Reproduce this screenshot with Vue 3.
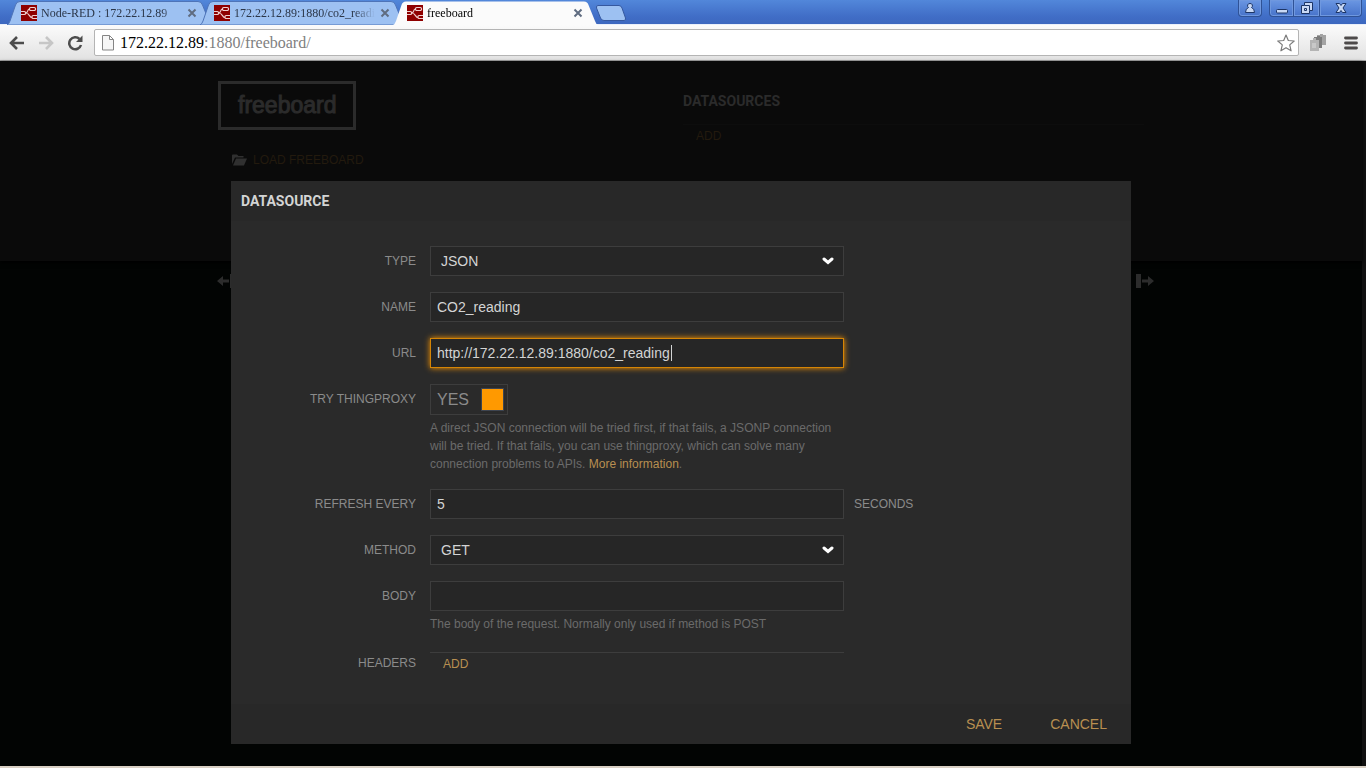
<script setup>
import { ref } from 'vue'

const tabs = [
  { title: 'Node-RED : 172.22.12.89', active: false },
  { title: '172.22.12.89:1880/co2_reading', active: false },
  { title: 'freeboard', active: true },
]
const type = ref('JSON')
const name = ref('CO2_reading')
const url = ref('http://172.22.12.89:1880/co2_reading')
const proxy = ref(true)
const refresh = ref('5')
const method = ref('GET')
const body = ref('')
</script>

<template>
  <div class="window">
    <header class="titlebar">
      <nav class="tabs">
        <div v-for="t in tabs" :key="t.title" class="tab" :class="{ active: t.active }">
          <svg class="tab-shape" viewBox="0 0 209 24" preserveAspectRatio="none" aria-hidden="true">
            <path d="M2 24 Q4 23 5 20 L10.500 4 Q11.500 .5 15 .5 H193 Q196.500 .5 197.500 4 L204 20 Q205 23 207 24 Z" />
          </svg>
          <svg class="favicon" viewBox="0 0 16 16" aria-hidden="true">
            <rect width="16" height="16" fill="#8f0000" />
            <g fill="none" stroke="#f0d0d0" stroke-width="1.200">
              <rect x="8.500" y="2.500" width="6" height="3" rx="1.200" />
              <path d="M0 6.500 H3.500 Q4.500 6.500 4.500 7.500 V8.500 Q4.500 9.500 3.500 9.500 H0" />
              <path d="M4.500 8 C7.500 8 6 4 8.500 4 M4.500 8 C9 8 8 12.500 11 12.500 M16 10.500 H12 Q11 10.500 11 11.500 V12.500 Q11 13.500 12 13.500 H16" />
            </g>
          </svg>
          <a href="#" class="tab-title">{{ t.title }}</a>
          <button class="tab-close" aria-label="Close tab">
            <svg viewBox="0 0 10 10"><path d="M1.500 1.500 L8.500 8.500 M8.500 1.500 L1.500 8.500" /></svg>
          </button>
        </div>
        <button class="new-tab" aria-label="New tab">
          <svg viewBox="0 0 32 16"><path d="M3 .5 H24 Q26 .5 27 3 L30.500 13 Q31 15.500 29 15.500 H9 Q6.500 15.500 5.500 13 L1.500 3 Q1 .5 3 .5 Z" /></svg>
        </button>
      </nav>
      <div class="win-controls">
        <button class="ctl user" aria-label="User">
          <svg viewBox="0 0 12 12"><path d="M6 1.500 a2.200 2.200 0 0 1 1.500 4 Q10.500 6.500 10.500 10.500 H1.500 Q1.500 6.500 4.500 5.500 A2.200 2.200 0 0 1 6 1.500 Z" /></svg>
        </button>
        <div class="ctl-group">
          <button class="ctl min" aria-label="Minimize">
            <svg viewBox="0 0 12 12"><rect x=".5" y="7.500" width="11" height="3.500" rx="1" /></svg>
          </button>
          <button class="ctl max" aria-label="Restore">
            <svg viewBox="0 0 12 12"><path d="M3.500 .5 H11.500 V8.500 H8.500 V11.500 H.5 V3.500 H3.500 Z" /><path d="M3.500 3.500 H8.500 V8.500 M3.500 6.500 H5.500 V8.500 H3.500 Z" /></svg>
          </button>
          <button class="ctl close" aria-label="Close">
            <svg viewBox="0 0 12 12"><path d="M1 1.500 H4.500 L6 3.500 L7.500 1.500 H11 L8 6 L11 10.500 H7.500 L6 8.500 L4.500 10.500 H1 L4 6 Z" /></svg>
          </button>
        </div>
      </div>
    </header>

    <div class="toolbar">
      <button class="tool" aria-label="Back">
        <svg viewBox="0 0 16 16"><path d="M8 2 L2 8 L8 14 M2.500 8 H15" fill="none" stroke="#4c4c4c" stroke-width="2.600" /></svg>
      </button>
      <button class="tool" aria-label="Forward">
        <svg viewBox="0 0 16 16"><path d="M8 2 L14 8 L8 14 M13.500 8 H1" fill="none" stroke="#c6c6c6" stroke-width="2.600" /></svg>
      </button>
      <button class="tool" aria-label="Reload">
        <svg viewBox="0 0 16 16"><path d="M12.500 4 A6 6 0 1 0 14 10" fill="none" stroke="#4c4c4c" stroke-width="2.500" /><path d="M15.500 .5 V7 H9 Z" fill="#4c4c4c" /></svg>
      </button>
      <div class="address">
        <svg class="page-icon" viewBox="0 0 12 16"><path d="M.5 .5 H7.500 L11.500 4.500 V15 H.5 Z M7.500 .5 V4.500 H11.500" fill="#f6f6f6" stroke="#858585" /></svg>
        <span class="address-text"><b>172.22.12.89</b>:1880/freeboard/</span>
        <button class="star" aria-label="Bookmark">
          <svg viewBox="0 0 18 18"><path d="M9 1 L11.300 6.500 L17.200 7 L12.700 10.900 L14.100 16.800 L9 13.700 L3.900 16.800 L5.300 10.900 L.8 7 L6.700 6.500 Z" fill="#fff" stroke="#7b7b7b" stroke-width="1.200" stroke-linejoin="round" /></svg>
        </button>
      </div>
      <button class="tool ext" aria-label="Extension">
        <svg viewBox="0 0 18 18"><path d="M8 1 h3 v-1 h3 v1 h3 v10 h-9 z" fill="#a3a3a3" /><path d="M5 3 h3 v-1 h3 v1 h2 v11 h-8 z" fill="#7b7b7b" /><path d="M1 6 h3 v-2 h3 v2 h3 v11 h-9 z" fill="#b4b4b4" /><path d="M3 9 h4 v5 h-4 z" fill="#c8c8c8" /></svg>
      </button>
      <button class="tool menu" aria-label="Menu">
        <svg viewBox="0 0 14 14"><path d="M1.500 2 H12.500 M1.500 7 H12.500 M1.500 12 H12.500" stroke="#4d4a4a" stroke-width="2.800" stroke-linecap="round" /></svg>
      </button>
    </div>

    <main class="page">
      <div class="board">
        <section class="board-head">
          <div class="board-inner">
            <div>
              <h1 class="logo">freeboard</h1>
              <a href="#" class="load">
                <svg viewBox="0 0 15 12"><path d="M0 10 V1.500 Q0 .5 1 .5 H5 L6.500 2 H11.500 V3.500 H3 Z" /><path d="M1 11.500 L4 4.500 H15 L12 11.500 Z" /></svg>
                <span>LOAD FREEBOARD</span>
              </a>
            </div>
            <div>
              <h2 class="ds-title">DATASOURCES</h2>
              <div class="ds-row"><a href="#">ADD</a></div>
            </div>
          </div>
        </section>
        <div class="columns">
          <svg viewBox="0 0 19 14"><path d="M0 7 L6 2 V5.500 H12 V8.500 H6 V12 Z M13 0 H18 V14 H13 Z" /></svg>
          <svg viewBox="0 0 19 14"><path d="M19 7 L13 2 V5.500 H7 V8.500 H13 V12 Z M1 0 H6 V14 H1 Z" /></svg>
        </div>
      </div>

      <div class="overlay">
        <form class="modal" @submit.prevent>
          <h2 class="modal-title">DATASOURCE</h2>
          <div class="modal-body">
            <div class="row">
              <label for="type">TYPE</label>
              <div class="select">
                <select id="type" v-model="type"><option>JSON</option></select>
                <svg viewBox="0 0 12 8"><path d="M2 2 L6 5.500 L10 2" /></svg>
              </div>
            </div>
            <div class="row">
              <label for="name">NAME</label>
              <input id="name" v-model="name" type="text" />
            </div>
            <div class="row">
              <label for="url">URL</label>
              <div class="url-field">
                <input id="url" v-model="url" type="text" class="focused" />
                <i class="caret"></i>
              </div>
            </div>
            <div class="row">
              <label for="proxy">TRY THINGPROXY</label>
              <div>
                <div class="toggle">
                  <input id="proxy" v-model="proxy" type="checkbox" />
                  <span>{{ proxy ? 'YES' : 'NO' }}</span>
                  <i class="knob"></i>
                </div>
                <p class="hint">A direct JSON connection will be tried first, if that fails, a JSONP connection will be tried. If that fails, you can use thingproxy, which can solve many connection problems to APIs. <a href="#">More information</a>.</p>
              </div>
            </div>
            <div class="row">
              <label for="refresh">REFRESH EVERY</label>
              <input id="refresh" v-model="refresh" type="text" />
              <span class="suffix">SECONDS</span>
            </div>
            <div class="row">
              <label for="method">METHOD</label>
              <div class="select">
                <select id="method" v-model="method"><option>GET</option></select>
                <svg viewBox="0 0 12 8"><path d="M2 2 L6 5.500 L10 2" /></svg>
              </div>
            </div>
            <div class="row">
              <label for="body">BODY</label>
              <div>
                <input id="body" v-model="body" type="text" />
                <p class="hint">The body of the request. Normally only used if method is POST</p>
              </div>
            </div>
            <div class="row headers">
              <span class="label">HEADERS</span>
              <div class="header-list"><a href="#">ADD</a></div>
            </div>
          </div>
          <footer class="modal-foot">
            <button type="submit">SAVE</button>
            <button type="button">CANCEL</button>
          </footer>
        </form>
      </div>
    </main>
  </div>
</template>

<style>
body {
  background: #000;
}
</style>

<style scoped>
* {
  box-sizing: border-box;
}
.window {
  display: flex;
  flex-direction: column;
  min-height: 100vh;
  border-bottom: 2px solid #d9d0c4;
  font-family: "Liberation Sans", Arial, sans-serif;
}
button {
  padding: 0;
  border: 0;
  background: none;
  font-family: inherit;
}
svg {
  display: block;
}
a {
  text-decoration: none;
}

/* Browser frame */
.titlebar {
  display: flex;
  justify-content: space-between;
  height: 25px;
  background: linear-gradient(#5287da, #406dc6 70%, #3d68bf);
  border-bottom: 1px solid #e9effa;
}
.tabs {
  display: flex;
  padding: 1px 0 0 5px;
}
.tab {
  position: relative;
  display: flex;
  align-items: center;
  width: 209px;
  height: 24px;
  margin-right: -16px;
  padding: 0 17px 0 16px;
}
.tab.active {
  z-index: 1;
}
.tab-shape {
  position: absolute;
  inset: 0;
  width: 100%;
  height: 100%;
  fill: #9dc1f2;
  stroke: #4e74b8;
}
.active .tab-shape {
  fill: #fbfbfb;
  stroke: none;
}
.favicon {
  position: relative;
  width: 16px;
  height: 16px;
}
.tab-title {
  position: relative;
  flex: 1;
  margin-left: 4px;
  overflow: hidden;
  white-space: nowrap;
  color: #2b3648;
  font: 12px/16px "Liberation Serif", serif;
  mask-image: linear-gradient(90deg, #000 85%, transparent);
}
.active .tab-title {
  color: #000;
}
.tab-close {
  position: relative;
  width: 10px;
  height: 10px;
  margin-left: 5px;
}
.tab-close path {
  fill: none;
  stroke: #5f6c80;
  stroke-width: 2;
}
.new-tab {
  width: 32px;
  height: 16px;
  margin: 4px 0 0 11px;
}
.new-tab path {
  fill: #9dc1f2;
  stroke: #35589f;
}
.win-controls {
  display: flex;
  gap: 7px;
  padding-right: 4px;
}
.ctl-group {
  display: flex;
}
.ctl {
  display: flex;
  align-items: center;
  justify-content: center;
  height: 17px;
  border: 1px solid #2f5296;
  border-top: 0;
  background: linear-gradient(#6b97e2, #4773ca);
  box-shadow: inset 0 0 0 1px #6f98df;
}
.ctl svg {
  width: 12px;
  height: 12px;
}
.ctl path,
.ctl rect {
  fill: #c9d9f5;
  stroke: #1c3566;
}
.user {
  width: 24px;
  border-radius: 0 0 4px 4px;
}
.min {
  width: 25px;
  border-radius: 0 0 0 4px;
}
.max {
  width: 26px;
  border-left: 0;
}
.close {
  width: 42px;
  border-left: 0;
  border-radius: 0 0 4px 0;
}
.toolbar {
  display: flex;
  align-items: center;
  height: 36px;
  padding: 0 8px 0 9px;
  background: linear-gradient(#fbfbfb, #e2e2e2);
  border-bottom: 1px solid #a5a5a5;
}
.tool {
  width: 16px;
  height: 16px;
  margin-right: 13px;
}
.address {
  display: flex;
  flex: 1;
  align-items: center;
  height: 27px;
  margin-left: -2px;
  padding: 0 3px 0 7px;
  border: 1px solid #b4b4b4;
  border-radius: 2px;
  background: #fff;
}
.page-icon {
  width: 12px;
  height: 16px;
}
.address-text {
  flex: 1;
  margin-left: 6px;
  color: #808080;
  font: 16px/20px "Liberation Serif", serif;
}
.address-text b {
  color: #000;
  font-weight: 400;
}
.star,
.star svg,
.ext,
.ext svg {
  width: 18px;
  height: 18px;
}
.ext {
  margin: 0 17px 0 10px;
}
.menu {
  width: 14px;
  height: 14px;
  margin: 0;
}

/* Dashboard */
.page {
  position: relative;
  flex: 1;
  background: #020403;
  border-right: 4px solid #101010;
}
.board-head {
  height: 200px;
  padding-top: 20px;
  background: #0a0a0a;
  box-shadow: 0 2px 4px #000;
}
.board-inner {
  display: grid;
  grid-template-columns: 1fr 1fr;
  gap: 4px;
  width: 926px;
  max-width: 100%;
  margin: 0 auto;
}
.logo {
  width: fit-content;
  margin: 0;
  padding: 0 17px;
  border: 3px solid #2b2b2b;
  color: #2b2b2b;
  font-size: 23px;
  font-weight: 400;
  line-height: 43px;
  -webkit-text-stroke: 1px #2b2b2b;
}
.load {
  display: flex;
  align-items: center;
  gap: 6px;
  margin: 21px 0 0 14px;
  color: #231a0e;
  font-size: 12px;
  line-height: 18px;
}
.load svg {
  width: 15px;
  height: 12px;
  fill: #303030;
}
.ds-title {
  margin: 0;
  color: #2b2b2b;
  font: 700 14px/40px Roboto, sans-serif;
}
.ds-row {
  margin-top: 3px;
  padding-left: 13px;
  border-top: 1px solid #0d0d0d;
  font-size: 12px;
  line-height: 22px;
}
.ds-row a {
  color: #231a0e;
}
.columns {
  display: flex;
  justify-content: space-between;
  width: 946px;
  max-width: 100%;
  margin: 0 auto;
  padding: 13px 0 0 9px;
}
.columns svg {
  width: 19px;
  height: 14px;
  fill: #2c2c2c;
}

/* Dialog */
.overlay {
  position: absolute;
  inset: 0;
  padding-top: 120px;
}
.modal {
  width: 900px;
  max-width: 100%;
  margin: 0 auto;
  background: #2a2a2a;
  color: #8b8b8b;
}
.modal-title {
  margin: 0;
  padding-left: 10px;
  background: #282828;
  color: #d3d4d4;
  font: 700 14px/40px Roboto, sans-serif;
}
.modal-body {
  display: flex;
  flex-direction: column;
  gap: 16px;
  padding: 25px 0 29px;
}
.row {
  display: grid;
  grid-template-columns: 185px 46% auto;
  column-gap: 14px;
}
.row label,
.label {
  font-size: 12px;
  line-height: 30px;
  text-align: right;
}
input[type="text"],
select {
  display: block;
  width: 100%;
  height: 30px;
  margin: 0;
  padding: 0 6px;
  border: 1px solid #3d3d3d;
  border-radius: 0;
  background: #262626;
  color: #d3d4d4;
  font: 14px "Liberation Sans", Arial, sans-serif;
  outline: none;
}
.select,
.url-field {
  position: relative;
}
select {
  appearance: none;
  padding: 0 10px;
}
.select svg {
  position: absolute;
  top: 11px;
  right: 10px;
  width: 12px;
  height: 8px;
  pointer-events: none;
}
.select path {
  fill: none;
  stroke: #fff;
  stroke-width: 3;
  stroke-linecap: round;
}
input.focused {
  border-color: #d68505;
  box-shadow: 0 0 6px #ff9900;
}
.caret {
  position: absolute;
  top: 7px;
  left: 241px;
  width: 1px;
  height: 16px;
  background: #d3d4d4;
}
.toggle {
  position: relative;
  display: flex;
  align-items: center;
  justify-content: space-between;
  width: 78px;
  height: 31px;
  padding: 0 3px 0 6px;
  border: 1px solid #3d3d3d;
  font-size: 16px;
}
.toggle input {
  position: absolute;
  inset: 0;
  width: 100%;
  height: 100%;
  margin: 0;
  opacity: 0;
}
.knob {
  width: 23px;
  height: 23px;
  border: 1px solid #3d4450;
  background: #ff9900;
}
.hint {
  margin: 4px 0 0;
  color: #6b6b6b;
  font-size: 12px;
  line-height: 18px;
}
.hint a,
.header-list a {
  color: #b88f51;
}
.suffix {
  margin-left: -4px;
  font-size: 12px;
  line-height: 30px;
}
.headers {
  margin-top: 3px;
}
.headers .label,
.header-list {
  line-height: 22px;
}
.header-list {
  padding-left: 13px;
  border-top: 1px solid #3d3d3d;
  font-size: 12px;
}
.modal-foot {
  display: flex;
  justify-content: flex-end;
  gap: 48px;
  padding-right: 24px;
  background: #282828;
}
.modal-foot button {
  color: #b88f51;
  font-size: 14px;
  line-height: 40px;
}
</style>
